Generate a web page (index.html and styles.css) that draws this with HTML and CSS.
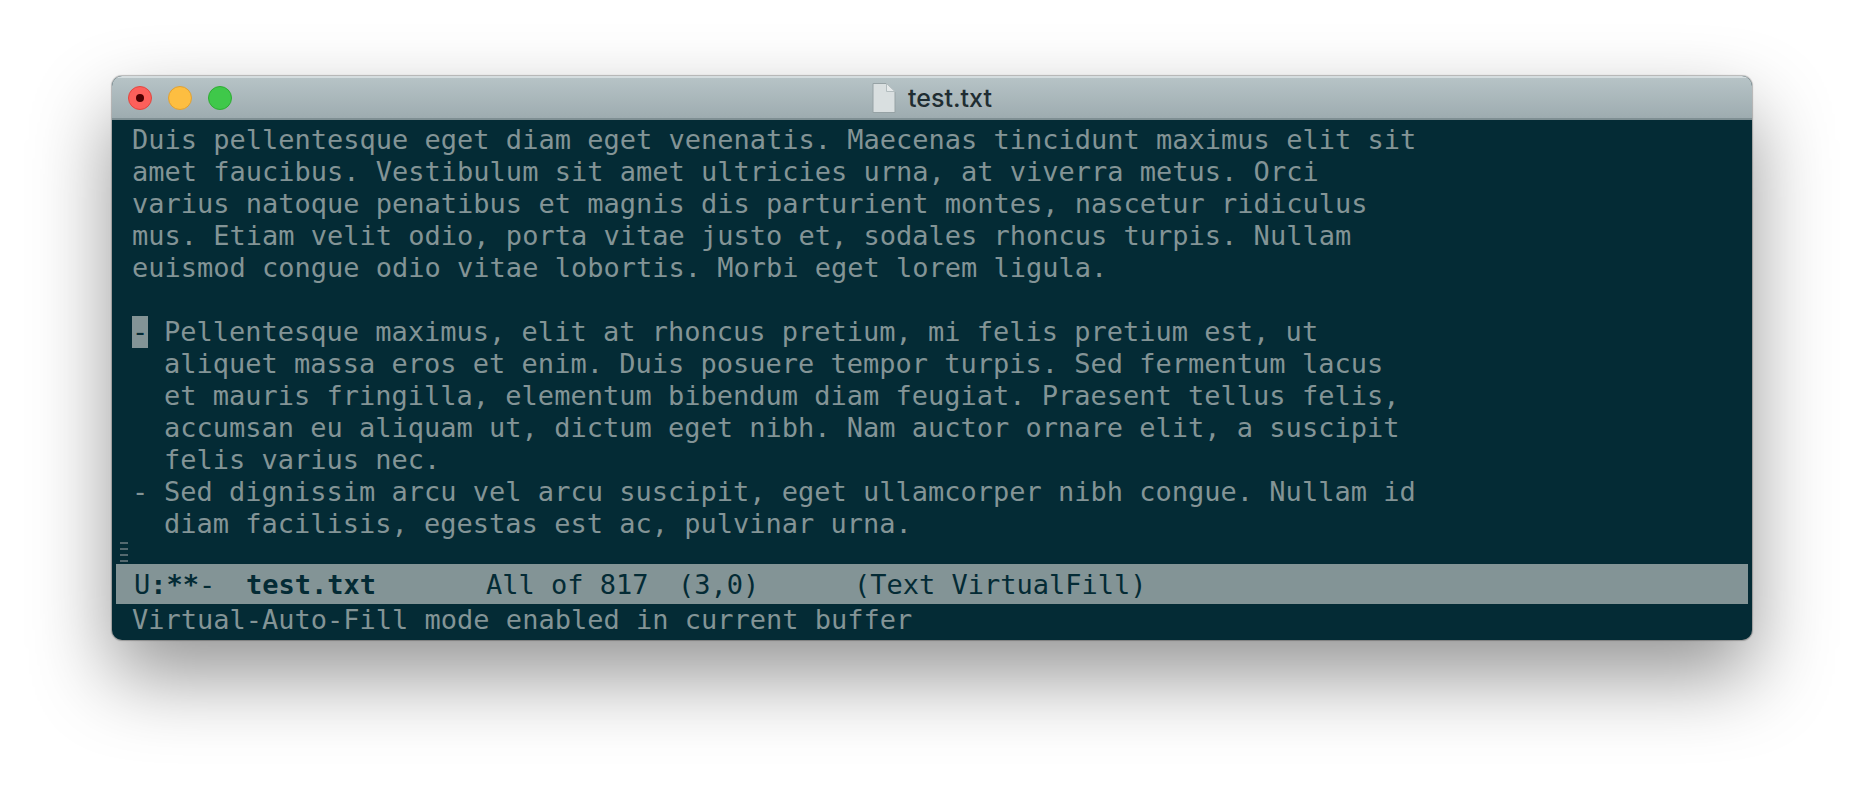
FILE: index.html
```html
<!DOCTYPE html>
<html lang="en">
<head>
<meta charset="utf-8">
<title>test.txt</title>
<link rel="stylesheet" href="styles.css">
</head>
<body>
<main class="window">
  <header class="titlebar">
    <div class="controls">
      <button class="control close" type="button" aria-label="Close"></button>
      <button class="control minimize" type="button" aria-label="Minimize"></button>
      <button class="control zoom" type="button" aria-label="Zoom"></button>
    </div>
    <h1 class="title">
      <svg class="file-icon" viewBox="0 0 24 32" aria-hidden="true">
        <path d="M1 1.5H14.5L23 10V30.5H1Z" fill="#d9dfe0" stroke="#96a2a5"/>
        <path d="M14.5 1.5V9.5H23Z" fill="#e6eaeb" stroke="#b3bdbf"/>
      </svg>
      <span>test.txt</span>
    </h1>
  </header>
  <section class="buffer">
<pre class="text">Duis pellentesque eget diam eget venenatis. Maecenas tincidunt maximus elit sit
amet faucibus. Vestibulum sit amet ultricies urna, at viverra metus. Orci
varius natoque penatibus et magnis dis parturient montes, nascetur ridiculus
mus. Etiam velit odio, porta vitae justo et, sodales rhoncus turpis. Nullam
euismod congue odio vitae lobortis. Morbi eget lorem ligula.</pre>
<div class="item"><span class="cursor">-</span><pre class="item-text">Pellentesque maximus, elit at rhoncus pretium, mi felis pretium est, ut
aliquet massa eros et enim. Duis posuere tempor turpis. Sed fermentum lacus
et mauris fringilla, elementum bibendum diam feugiat. Praesent tellus felis,
accumsan eu aliquam ut, dictum eget nibh. Nam auctor ornare elit, a suscipit
felis varius nec.</pre></div>
<div class="item"><span>-</span><pre class="item-text">Sed dignissim arcu vel arcu suscipit, eget ullamcorper nibh congue. Nullam id
diam facilisis, egestas est ac, pulvinar urna.</pre></div>
    <div class="fringe"><i></i><i></i><i></i><i></i></div>
  </section>
  <div class="modeline">
    <span class="status">U<b>:**</b>-</span>
    <b class="name">test.txt</b>
    <span class="size">All of 817</span>
    <span class="position">(3,0)</span>
    <span>(Text VirtualFill)</span>
  </div>
  <div class="echo">Virtual-Auto-Fill mode enabled in current buffer</div>
</main>
</body>
</html>
```

FILE: styles.css
```css
* {
  box-sizing: border-box;
}

body {
  margin: 0;
  padding: 76px 112px 148px;
  background: #fff;
}

.window {
  overflow: hidden;
  border-radius: 10px;
  background: #042b35;
  color: #839496;
  font: 27px/32px "DejaVu Sans Mono", monospace;
  box-shadow: 0 0 1px 1px rgba(0, 0, 0, 0.25), 0 36px 80px rgba(0, 0, 0, 0.42);
}

.titlebar {
  display: grid;
  grid-template-columns: 1fr auto 1fr;
  align-items: center;
  height: 44px;
  padding: 0 16px;
  border-top: 2px solid #d5dddf;
  border-bottom: 2px solid #7f8f93;
  background: linear-gradient(#b6c3c6, #9eacb0);
}

.controls {
  display: flex;
  gap: 16px;
}

.control {
  display: grid;
  place-items: center;
  width: 24px;
  height: 24px;
  padding: 0;
  border: 1px solid;
  border-radius: 50%;
}

.close {
  border-color: #e2463f;
  background: #fc605b;
}

.close::after {
  content: "";
  width: 8px;
  height: 8px;
  border-radius: 50%;
  background: #4c0102;
}

.minimize {
  border-color: #dfa034;
  background: #fdbe41;
}

.zoom {
  border-color: #2fac34;
  background: #3fc84a;
}

.title {
  display: flex;
  align-items: center;
  gap: 12px;
  margin: 0;
  color: #1f2d32;
  font: 500 25px/32px Inter, sans-serif;
}

.file-icon {
  width: 24px;
  height: 32px;
}

.buffer {
  padding-top: 4px;
}

.text {
  margin: 0 0 32px;
  padding: 0 20px;
  font: inherit;
}

.item {
  display: grid;
  grid-template-columns: 16px 1fr;
  column-gap: 16px;
  align-items: start;
  padding: 0 20px;
}

.item-text {
  margin: 0;
  font: inherit;
}

.cursor {
  background: #839496;
  color: #042b35;
}

.fringe {
  display: grid;
  gap: 4px;
  align-content: start;
  height: 24px;
  padding: 2px 8px;
}

.fringe i {
  width: 8px;
  height: 2px;
  background: #54696f;
}

.modeline {
  display: flex;
  margin: 0 4px;
  padding: 5px 18px 3px;
  background: #839496;
  color: #042b35;
  white-space: pre;
}

.status {
  width: 112px;
}

.name {
  width: 240px;
}

.size {
  width: 192px;
}

.position {
  width: 176px;
}

.echo {
  padding: 0 20px 4px;
}
```
